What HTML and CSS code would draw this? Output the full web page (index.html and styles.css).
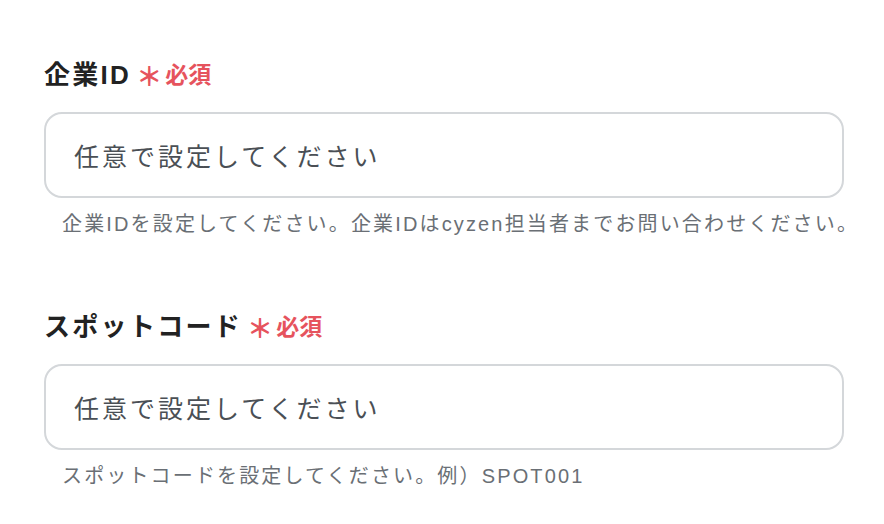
FILE: index.html
```html
<!DOCTYPE html>
<html lang="ja">
<head>
<meta charset="utf-8">
<link rel="stylesheet" href="styles.css">
</head>
<body>
<div class="form">
  <div class="field">
    <div class="label-row">
      <span class="label">企業ID</span>
      <span class="req"><span class="star">＊</span>必須</span>
    </div>
    <div class="input"><span class="placeholder">任意で設定してください</span></div>
    <p class="help">企業IDを設定してください。企業IDはcyzen担当者までお問い合わせください。</p>
  </div>
  <div class="field">
    <div class="label-row">
      <span class="label">スポットコード</span>
      <span class="req"><span class="star">＊</span>必須</span>
    </div>
    <div class="input"><span class="placeholder">任意で設定してください</span></div>
    <p class="help">スポットコードを設定してください。例）SPOT001</p>
  </div>
</div>
</body>
</html>
```
FILE: styles.css
```css
html, body {
  margin: 0;
  padding: 0;
  background: #ffffff;
}
body {
  font-family: "Liberation Sans", "Noto Sans CJK JP", sans-serif;
  color: #222222;
}
.form {
  padding: 57px 0 0 44px;
  width: 800px;
}
.field {
  margin-bottom: 71px;
}
.label-row {
  display: flex;
  align-items: center;
  height: 36px;
  gap: 5px;
}
.label {
  font-size: 26px;
  font-weight: 700;
  letter-spacing: 2.3px;
  color: #222222;
  line-height: 36px;
}
.req {
  font-size: 23px;
  font-weight: 700;
  color: #e6535d;
  line-height: 36px;
  display: flex;
  align-items: center;
}
.star {
  font-size: 26px;
  margin-right: 3px;
  position: relative;
  top: 2px;
}
.input {
  margin-top: 19px;
  height: 86px;
  box-sizing: border-box;
  border: 2px solid #d4d7da;
  border-radius: 18px;
  display: flex;
  align-items: center;
  padding-left: 28px;
}
.placeholder {
  font-size: 25px;
  letter-spacing: 3px;
  color: #4a4f55;
}
.help {
  margin: 12px 0 0 18px;
  font-size: 20px;
  letter-spacing: 2.15px;
  line-height: 28px;
  color: #6a6f75;
  white-space: nowrap;
}
```
